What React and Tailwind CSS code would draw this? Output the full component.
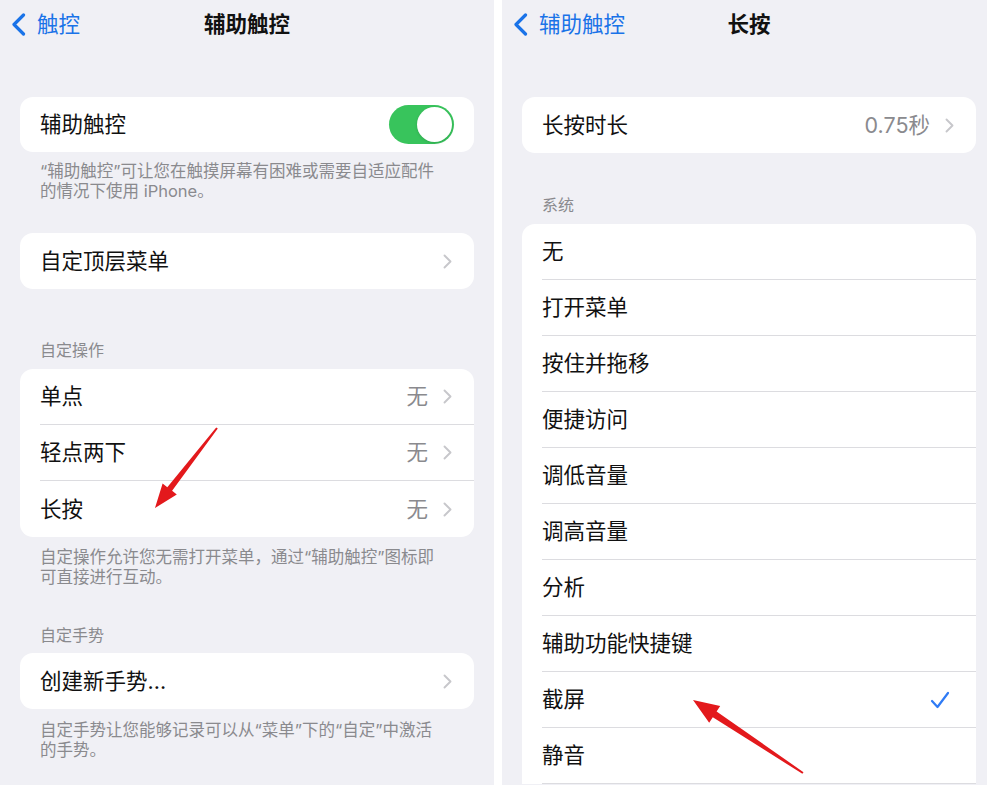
import React from "react";

const Chevron = () => (
  <svg width="9" height="15" viewBox="0 0 9 15" fill="none" className="shrink-0">
    <path d="M1.5 1.5 L7.5 7.5 L1.5 13.5" stroke="#c7c7cb" strokeWidth="1.9" strokeLinecap="round" strokeLinejoin="round" />
  </svg>
);

const BackChevron = () => (
  <svg width="15" height="23" viewBox="0 0 15 23" fill="none" className="shrink-0">
    <path d="M12.5 2 L3 11.5 L12.5 21" stroke="#1a73e8" strokeWidth="3.2" strokeLinecap="round" strokeLinejoin="round" />
  </svg>
);

const NavBar = ({ back, title }) => (
  <div className="h-[48px] grid grid-cols-[1fr_auto_1fr] items-center">
    <div className="flex items-center gap-[11px] pl-[11px]">
      <BackChevron />
      <span className="text-[21.5px] text-[#1a73e8]">{back}</span>
    </div>
    <div className="text-[21.5px] font-semibold text-[#111]">{title}</div>
    <div />
  </div>
);

const Row = ({ label, value, chevron, check, last }) => (
  <div className="h-[56px] pl-5 flex">
    <div className={`flex-1 flex items-center pr-[22px] ${last ? "" : "border-b border-[#dcdce0]"}`}>
      <span className="flex-1 text-[21.5px] text-[#111]">{label}</span>
      {value && <span className="text-[21.5px] text-[#8a8a8e] mr-[15px]">{value}</span>}
      {chevron && <Chevron />}
      {check && (
        <svg width="20" height="18" viewBox="0 0 20 18" fill="none" className="mr-[4px]">
          <path d="M2 10 L7.5 16 L18 2" stroke="#2f7bf5" strokeWidth="2.2" strokeLinecap="round" strokeLinejoin="round" />
        </svg>
      )}
    </div>
  </div>
);

const Card = ({ children, className = "" }) => (
  <div className={`mx-5 bg-white rounded-[13px] overflow-hidden ${className}`}>{children}</div>
);

const Footer = ({ children, className = "" }) => (
  <p className={`pl-10 pr-[48px] text-[16.5px] leading-[20px] text-[#8a8a8e] ${className}`}>{children}</p>
);

const Header = ({ children, className = "" }) => (
  <p className={`px-10 text-[16px] leading-[20px] text-[#8a8a8e] ${className}`}>{children}</p>
);

const systemItems = ["无", "打开菜单", "按住并拖移", "便捷访问", "调低音量", "调高音量", "分析", "辅助功能快捷键", "截屏", "静音"];

export default function App() {
  return (
    <div className="relative w-[987px] h-[785px] overflow-hidden flex bg-white font-['Inter','Noto_Sans_CJK_SC',sans-serif]">
      {/* 左侧：辅助触控 */}
      <div className="w-[494px] shrink-0 bg-[#f0f0f5]">
        <NavBar back="触控" title="辅助触控" />

        <Card className="mt-[49px]">
          <div className="h-[55px] px-5 flex items-center justify-between">
            <span className="text-[21.5px] text-[#111]">辅助触控</span>
            <div className="w-[65px] h-[39px] rounded-full bg-[#38c45c] p-[2px] flex justify-end">
              <div className="w-[35px] h-[35px] rounded-full bg-white shadow-[0_1px_3px_rgba(0,0,0,0.15)]" />
            </div>
          </div>
        </Card>
        <Footer className="pt-[9px]">“辅助触控”可让您在触摸屏幕有困难或需要自适应配件的情况下使用 iPhone。</Footer>

        <Card className="mt-[32px]">
          <Row label="自定顶层菜单" chevron last />
        </Card>

        <Header className="mt-[51px] mb-[9px]">自定操作</Header>
        <Card>
          <Row label="单点" value="无" chevron />
          <Row label="轻点两下" value="无" chevron />
          <Row label="长按" value="无" chevron last />
        </Card>
        <Footer className="pt-[10px]">自定操作允许您无需打开菜单，通过“辅助触控”图标即可直接进行互动。</Footer>

        <Header className="mt-[38px] mb-[8px]">自定手势</Header>
        <Card>
          <Row label="创建新手势..." chevron last />
        </Card>
        <Footer className="pt-[11px]">自定手势让您能够记录可以从“菜单”下的“自定”中激活的手势。</Footer>
      </div>

      <div className="w-[8px] shrink-0 bg-white" />

      {/* 右侧：长按 */}
      <div className="w-[494px] shrink-0 bg-[#f0f0f5]">
        <NavBar back="辅助触控" title="长按" />

        <Card className="mt-[49px]">
          <Row label="长按时长" value="0.75秒" chevron last />
        </Card>

        <Header className="mt-[42px] mb-[9px]">系统</Header>
        <div className="mx-5 bg-white rounded-t-[13px] overflow-hidden">
          {systemItems.map((item) => (
            <Row key={item} label={item} check={item === "截屏"} />
          ))}
        </div>
      </div>

      {/* 红色箭头标注 */}
      <svg className="absolute inset-0 pointer-events-none" width="987" height="785" viewBox="0 0 987 785">
        <polygon points="217.8,428.6 172.1,490.8 176.8,494.5 155,508 162.6,483.5 167.3,487.2 216.2,427.4" fill="#e3191c" />
        <polygon points="803.5,772.2 716.6,711.5 720.2,706.1 693,700 709.2,722.7 712.8,717.3 802.4,773.8" fill="#e3191c" />
      </svg>
    </div>
  );
}
